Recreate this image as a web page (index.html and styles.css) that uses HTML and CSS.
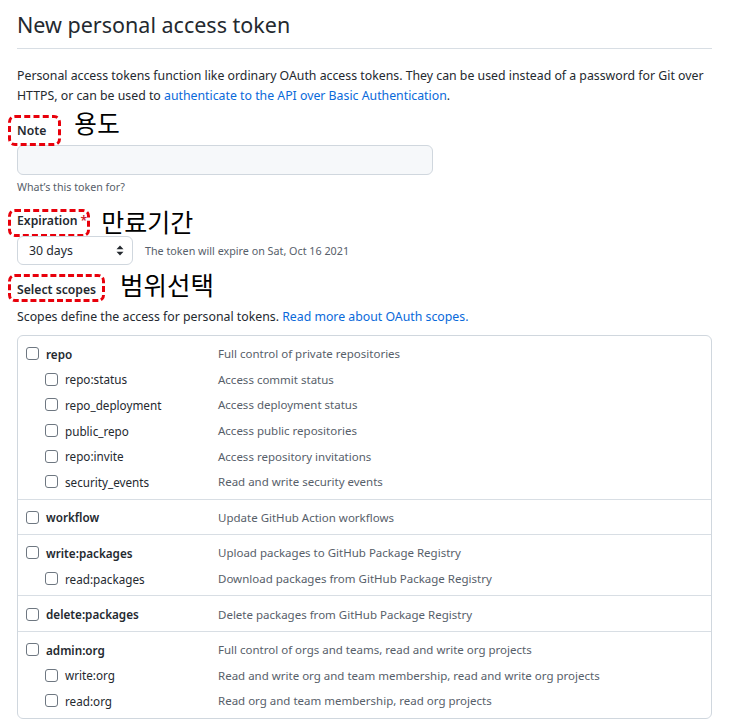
FILE: index.html
```html
<!DOCTYPE html>
<html lang="en">
<head>
<meta charset="utf-8">
<title>New personal access token</title>
<link rel="stylesheet" href="styles.css">
</head>
<body>
<div class="page">
  <h1 class="title">New personal access token</h1>
  <p class="intro">Personal access tokens function like ordinary OAuth access tokens. They can be used instead of a password for Git over HTTPS, or can be used to <a href="#">authenticate to the API over Basic Authentication</a>.</p>

  <div class="label-row note-row">
    <span class="anno anno-note">Note</span>
    <span class="ko">용도</span>
  </div>
  <div class="input"></div>
  <div class="hint">What’s this token for?</div>

  <div class="label-row exp-row">
    <span class="anno anno-exp">Expiration<span class="req">*</span></span>
    <span class="ko">만료기간</span>
  </div>
  <div class="exp-line">
    <div class="select">
      <span>30 days</span>
      <svg class="updown" width="8" height="11" viewBox="0 0 8 11"><path d="M4 0.5 L7.5 4.3 H0.5 Z M4 10.5 L7.5 6.7 H0.5 Z" fill="#24292f"/></svg>
    </div>
    <span class="expire-note">The token will expire on Sat, Oct 16 2021</span>
  </div>

  <div class="label-row scope-row">
    <span class="anno anno-scope">Select scopes</span>
    <span class="ko">범위선택</span>
  </div>
  <p class="scope-intro">Scopes define the access for personal tokens. <a href="#">Read more about OAuth scopes.</a></p>

  <div class="scopes">
    <div class="group">
      <div class="row main"><span class="cb"></span><span class="name">repo</span><span class="desc">Full control of private repositories</span></div>
      <div class="row sub"><span class="cb"></span><span class="name">repo:status</span><span class="desc">Access commit status</span></div>
      <div class="row sub"><span class="cb"></span><span class="name">repo_deployment</span><span class="desc">Access deployment status</span></div>
      <div class="row sub"><span class="cb"></span><span class="name">public_repo</span><span class="desc">Access public repositories</span></div>
      <div class="row sub"><span class="cb"></span><span class="name">repo:invite</span><span class="desc">Access repository invitations</span></div>
      <div class="row sub"><span class="cb"></span><span class="name">security_events</span><span class="desc">Read and write security events</span></div>
    </div>
    <div class="group">
      <div class="row main"><span class="cb"></span><span class="name">workflow</span><span class="desc">Update GitHub Action workflows</span></div>
    </div>
    <div class="group">
      <div class="row main"><span class="cb"></span><span class="name">write:packages</span><span class="desc">Upload packages to GitHub Package Registry</span></div>
      <div class="row sub"><span class="cb"></span><span class="name">read:packages</span><span class="desc">Download packages from GitHub Package Registry</span></div>
    </div>
    <div class="group">
      <div class="row main"><span class="cb"></span><span class="name">delete:packages</span><span class="desc">Delete packages from GitHub Package Registry</span></div>
    </div>
    <div class="group">
      <div class="row main"><span class="cb"></span><span class="name">admin:org</span><span class="desc">Full control of orgs and teams, read and write org projects</span></div>
      <div class="row sub"><span class="cb"></span><span class="name">write:org</span><span class="desc">Read and write org and team membership, read and write org projects</span></div>
      <div class="row sub"><span class="cb"></span><span class="name">read:org</span><span class="desc">Read org and team membership, read org projects</span></div>
    </div>
  </div>
</div>
</body>
</html>
```
FILE: styles.css
```css
* { box-sizing: border-box; }
html, body { margin: 0; padding: 0; background: #ffffff; }
body {
  font-family: "Noto Sans", "Open Sans", sans-serif;
  font-size: 13px;
  color: #24292f;
}
a { color: #0969da; text-decoration: none; }
.page { padding: 0 24px 0 17px; width: 736px; }

.title {
  margin: 10px 0 0;
  font-size: 21.5px;
  font-weight: 400;
  line-height: 30px;
  padding-bottom: 8px;
  border-bottom: 1px solid #d8dee4;
  color: #24292f;
}
.intro {
  margin: 17px 0 0;
  line-height: 20px;
  font-size: 12.3px;
}

.label-row { display: flex; align-items: flex-start; }
.note-row { margin-top: 9px; height: 31px; }
.exp-row { margin-top: 14px; height: 28px; }
.scope-row { margin-top: 9px; height: 28px; }

.anno {
  display: block;
  flex: none;
  border: 3px dashed #e8000b;
  border-radius: 7px;
  margin-left: -9px;
  padding: 4px 12px 3px 6px;
  font-size: 12.2px;
  font-weight: 600;
  line-height: 18px;
  height: 31px;
  color: #24292f;
}
.anno-exp { padding: 0 0 4px 6px; height: 28px; }
.anno-scope { padding: 4px 6px 0 6px; height: 28px; }
.req { color: #cf222e; margin-left: 3px; }

.ko {
  font-family: "Noto Sans CJK KR", sans-serif;
  color: #000;
  line-height: 26px;
  flex: none;
}
.note-row .ko { font-size: 24.5px; letter-spacing: 0.5px; margin: -5px 0 0 13px; }
.exp-row .ko { font-size: 25px; margin: -1px 0 0 11px; }
.scope-row .ko { font-size: 25.5px; margin: -3px 0 0 15px; }

.input {
  margin-top: -1px;
  width: 416px;
  height: 30px;
  background: #f6f8fa;
  border: 1px solid #d0d7de;
  border-radius: 6px;
}
.hint {
  margin-top: 4px;
  height: 16px;
  line-height: 16px;
  font-size: 10.7px;
  color: #57606a;
}

.exp-line { display: flex; align-items: center; margin-top: -1px; height: 29px; }
.select {
  width: 116px;
  height: 29px;
  flex: none;
  border: 1px solid #d0d7de;
  border-radius: 6px;
  background: #fff;
  display: flex;
  align-items: center;
  justify-content: space-between;
  padding: 0 8px 0 11px;
  font-size: 12.3px;
}
.expire-note { margin-left: 12px; font-size: 10.75px; color: #57606a; }

.scope-intro {
  margin: 4px 0 0;
  line-height: 20px;
  height: 21px;
  font-size: 12.3px;
  padding-top: 1px;
}

.scopes {
  margin-top: 8px;
  border: 1px solid #d0d7de;
  border-radius: 6px;
}
.group { padding: 5px 0 4px; border-top: 1px solid #d8dee4; }
.group:first-child { border-top: none; padding-top: 5px; }
.row {
  display: flex;
  align-items: center;
  height: 25.6px;
}
.cb {
  width: 13px;
  height: 13px;
  border: 1px solid #6e7781;
  border-radius: 3px;
  flex: none;
}
.row.main .cb { margin-left: 8px; }
.row.sub .cb { margin-left: 27px; }
.name { margin-left: 7px; font-size: 11.7px; }
.row.main .name { font-weight: 600; width: 172px; }
.row.sub .name { width: 153px; }
.desc { font-size: 11.5px; color: #57606a; }
```
